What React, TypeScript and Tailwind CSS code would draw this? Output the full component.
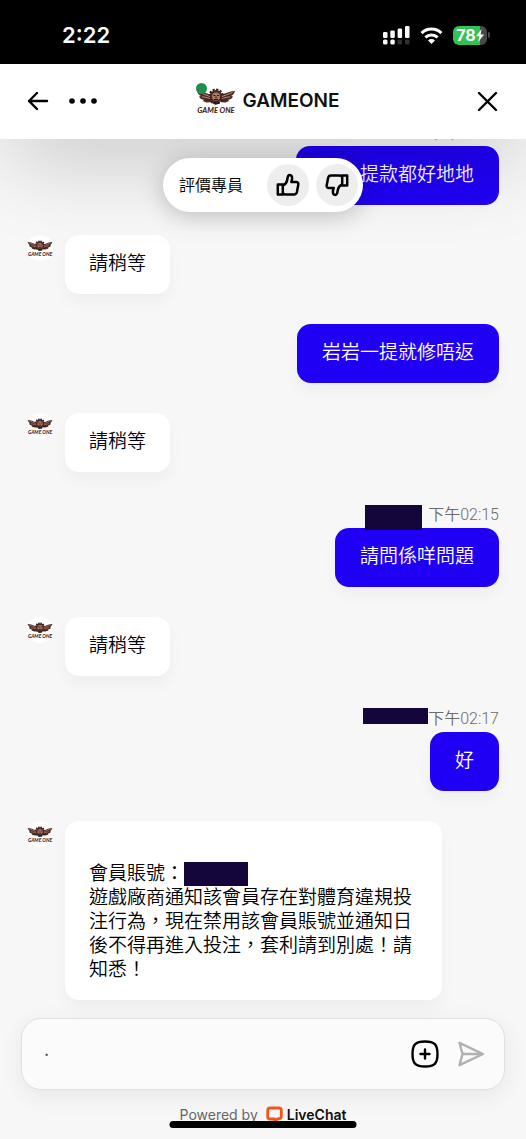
import type {ReactNode} from 'react';

type MessageProps = {
  children: ReactNode;
};

const Wings = ({className}: { className: string }) => (
  <svg viewBox="0 0 40 28" className={className} aria-hidden="true">
    <g fill="#4a2a22">
      <path d="M15 8C10 6 5 4 1 4c1 3 2 4 4 5l-2 .5c1 2.500 3 3 5 3.200l-1 1c2 2 5 2 8 1.300z"/>
      <path d="M25 8c5-2 10-4 14-4-1 3-2 4-4 5l2 .5c-1 2.500-3 3-5 3.200l1 1c-2 2-5 2-8 1.300z"/>
      <circle cx="20" cy="9.500" r="6.500"/>
    </g>
    <circle cx="20" cy="9.500" r="7" fill="none" stroke="#33191a" strokeWidth="2" strokeDasharray="2.200 1.460"/>
    <path
      d="M14 9.500C10 8 6 6.500 3.500 5.500M14 11.500C11 10.500 8 10 6 9.800M26 9.500c4-1.500 8-3 10.500-4M26 11.500c3-1 6-1.500 8-1.700"
      fill="none"
      stroke="#c89a86"
      strokeWidth="0.900"
    />
    <circle cx="20" cy="9.500" r="4" fill="#a87866"/>
    <path d="M17.500 8.500h2M21 8.500h2M20 9.500v2M18 12.500h4M16 15.500l4 1.500 4-1.500" stroke="#33191a" strokeWidth="1.200"/>
    <text
      x="20"
      y="25.500"
      textAnchor="middle"
      fontSize="7.500"
      fontWeight="900"
      fontStyle="italic"
      fill="#4a1f18"
      fontFamily="Lato, sans-serif"
    >
      GAME ONE
    </text>
  </svg>
);

const ThumbIcon = ({className = ''}: { className?: string }) => (
  <svg
    viewBox="0 0 24 24"
    className={`size-6 ${className}`}
    fill="none"
    stroke="currentColor"
    strokeWidth="2.500"
    strokeLinejoin="round"
    aria-hidden="true"
  >
    <path d="M1.800 11.500h5v10h-5z"/>
    <path d="M6.800 12.500c2.800-1.200 4.200-3.300 4.600-6.500.2-2.600.7-4 2.300-4 1.900 0 2.600 1.600 2.400 3.600-.1 1.200-.4 2.200-.8 3.400h4.700c1.800 0 2.600 1.200 2.300 2.800l-1.400 7.200c-.4 1.700-1.300 2.500-2.900 2.500H10c-1.300 0-2.300-.2-3.200-1"/>
  </svg>
);

const StatusBar = () => (
  <div className="flex h-16 items-center justify-between bg-black pl-[62px] pr-9 pt-1.5 text-white">
    <span className="text-[22px] font-semibold leading-7">2:22</span>
    <div className="flex items-center gap-2.5">
      <svg viewBox="0 0 27 19" className="h-[19px] w-[27px]" fill="white" aria-hidden="true">
        <rect x="0" y="6" width="4.500" height="6" rx="1.200"/>
        <rect x="7.300" y="4.500" width="4.500" height="7.500" rx="1.200"/>
        <rect x="14.600" y="2.500" width="4.500" height="9.500" rx="1.200"/>
        <rect x="22" y="0" width="4.500" height="12" rx="1.200"/>
        <rect x="0" y="13.500" width="4.500" height="5" rx="1.500"/>
        <rect x="7.300" y="13.500" width="4.500" height="5" rx="1.500"/>
        <rect x="14.600" y="13.500" width="4.500" height="5" rx="1.500" fill="#333"/>
        <rect x="22" y="13.500" width="4.500" height="5" rx="1.500" fill="#333"/>
      </svg>
      <svg viewBox="0 0 24 18" className="h-[17px] w-[23px]" fill="none" stroke="white" strokeWidth="3.200" aria-hidden="true">
        <path d="M1.500 6.500a15 15 0 0 1 21 0"/>
        <path d="M5.500 11a9.300 9.300 0 0 1 13 0"/>
        <path d="M12 18l-3.700-3.800a5.300 5.300 0 0 1 7.400 0z" fill="white" stroke="none"/>
      </svg>
      <div className="flex items-center gap-px">
        <div
          className="flex h-[19px] w-[34px] items-center justify-center rounded-md bg-linear-to-r from-[#34c759] from-78% to-[#4a4a4a] to-78% text-base font-bold leading-none">
          78
          <svg viewBox="0 0 8 13" className="h-[13px] w-2" fill="white" aria-hidden="true">
            <path d="M5.500 0L0 7.200h3.300L2.300 13 8 5.500H4.700z"/>
          </svg>
        </div>
        <div className="h-1.5 w-0.5 rounded-r-full bg-[#4a4a4a]"/>
      </div>
    </div>
  </div>
);

const Header = () => (
  <header
    className="relative z-10 flex h-[75px] items-center justify-between bg-white px-[27px] pb-0.5 shadow-[0_20px_90px_-10px_rgba(0,0,0,0.28)]">
    <div className="flex w-[72px] items-center gap-5">
      <button type="button" aria-label="Back">
        <svg
          viewBox="0 0 22 20"
          className="h-5 w-[22px]"
          fill="none"
          stroke="black"
          strokeWidth="2.400"
          strokeLinecap="round"
          strokeLinejoin="round"
        >
          <path d="M20 10H2M10 2L2 10l8 8"/>
        </svg>
      </button>
      <button type="button" aria-label="Menu">
        <svg viewBox="0 0 28 6" className="h-1.5 w-7">
          <circle cx="3" cy="3" r="2.800"/>
          <circle cx="14" cy="3" r="2.800"/>
          <circle cx="25" cy="3" r="2.800"/>
        </svg>
      </button>
    </div>
    <div className="flex items-center gap-1.5 pl-2.5">
      <div className="relative">
        <Wings className="h-7 w-10"/>
        <span className="absolute -top-1 left-0 size-[11px] rounded-full bg-[#1f8f4e]"/>
      </div>
      <h1 className="text-[19px] font-semibold leading-6 text-[#111]">GAMEONE</h1>
    </div>
    <div className="flex w-[72px] justify-end">
      <button type="button" aria-label="Close">
        <svg viewBox="0 0 24 24" className="size-6" stroke="black" strokeWidth="2.400" strokeLinecap="round">
          <path d="M4 4l17 17M21 4L4 21"/>
        </svg>
      </button>
    </div>
  </header>
);

const RatingPill = () => (
  <div
    className="absolute left-1/2 top-[19px] z-20 flex h-[54px] w-[200px] -translate-x-1/2 items-center rounded-full bg-white pl-4 pr-[5px] shadow-[0_4px_24px_rgba(0,0,0,0.22)]">
    <span className="flex-1 text-base font-[350] text-black">評價專員</span>
    <div className="flex gap-[7px]">
      <button
        type="button"
        aria-label="Good"
        className="flex size-[42px] items-center justify-center rounded-full bg-[#eeeeee]"
      >
        <ThumbIcon/>
      </button>
      <button
        type="button"
        aria-label="Bad"
        className="flex size-[42px] items-center justify-center rounded-full bg-[#eeeeee]"
      >
        <ThumbIcon className="rotate-180"/>
      </button>
    </div>
  </div>
);

const AgentMessage = ({children}: MessageProps) => (
  <div className="flex items-start gap-3">
    <div className="flex size-[26px] shrink-0 items-center justify-center rounded-full bg-white">
      <Wings className="h-[19px] w-[26px]"/>
    </div>
    <div
      className="max-w-[377px] rounded-[14px] bg-white px-6 pb-[18px] pt-[17px] text-[19px] font-[350] leading-6 text-black shadow-[0_8px_16px_rgba(0,0,0,0.04)]">
      {children}
    </div>
  </div>
);

const UserMessage = ({children}: MessageProps) => (
  <div className="flex justify-end">
    <div
      className="rounded-[14px] bg-[#2000f5] px-[25px] pb-[18px] pt-[17px] text-[19px] font-[350] leading-6 text-white shadow-[0_8px_16px_rgba(0,0,0,0.04)]">
      {children}
    </div>
  </div>
);

const Time = ({children}: MessageProps) => (
  <time className="font-[Roboto,'Noto_Sans_CJK_TC',sans-serif] text-base font-[350] leading-[26px] text-[#6b6b6b]">
    {children}
  </time>
);

const Composer = () => (
  <form
    className="mx-[21px] flex h-[72px] items-center rounded-[20px] border border-[#e0e0e0] bg-[#fbfbfb] pl-[22px] pr-[19px] shadow-[0_6px_24px_rgba(0,0,0,0.07)]">
    <textarea
      aria-label="Message"
      rows={1}
      defaultValue="."
      className="h-8 min-w-0 flex-1 resize-none overflow-hidden bg-transparent text-lg leading-6 text-[#444] outline-none"
    />
    <div className="flex items-center gap-[18px]">
      <button type="button" aria-label="Add">
        <svg
          viewBox="0 0 28 28"
          className="size-7"
          fill="none"
          stroke="black"
          strokeWidth="2.400"
          strokeLinecap="round"
        >
          <path d="M14 1.500c9.500 0 12.500 3 12.500 12.500s-3 12.500-12.500 12.500S1.500 23.500 1.500 14 4.500 1.500 14 1.500z"/>
          <path d="M14 9.500v9M9.500 14h9"/>
        </svg>
      </button>
      <button type="submit" aria-label="Send">
        <svg
          viewBox="0 0 28 28"
          className="size-7"
          fill="none"
          stroke="#b0b0b0"
          strokeWidth="2.400"
          strokeLinejoin="round"
        >
          <path d="M2.500 2.800L26 14 2.500 25.200 5.500 14zM5.500 14H26"/>
        </svg>
      </button>
    </div>
  </form>
);

const Footer = () => (
  <footer className="relative flex h-[49px] items-center justify-center gap-2">
    <span className="text-sm text-[#666]">Powered by</span>
    <a href="#livechat" className="flex items-center gap-1 text-sm font-semibold text-[#111]">
      <svg
        viewBox="0 0 17 17"
        className="size-[17px]"
        fill="none"
        stroke="#f0561d"
        strokeWidth="2.800"
        strokeLinejoin="round"
        aria-hidden="true"
      >
        <path d="M4 2h9q2.300 0 2.300 2.300v6.200q0 2-2 2.200l-2 .3-2.800 2.500v-2.500H4q-2.300 0-2.300-2.300V4.300Q1.700 2 4 2z"/>
      </svg>
      LiveChat
    </a>
    <div className="absolute bottom-[11px] left-1/2 h-[7px] w-[187px] -translate-x-1/2 rounded-full bg-black"/>
  </footer>
);

const App = () => {
  return (
    <div
      lang="zh-Hant"
      className="flex min-h-screen flex-col bg-[#f7f7f7] font-[Inter,'Noto_Sans_CJK_TC',sans-serif]"
    >
      <StatusBar/>
      <Header/>
      <div className="relative flex-1">
        <RatingPill/>
        <main className="flex flex-col gap-[30px] px-[27px] pb-[18px]">
          <div className="-mt-[19px]">
            <div className="flex justify-end">
              <Time>下午02:14</Time>
            </div>
            <div className="flex justify-end">
              <div
                className="w-[203px] rounded-[14px] bg-[#2000f5] px-[25px] pb-[18px] pt-[17px] text-right text-[19px] font-[350] leading-6 text-white">
                提款都好地地
              </div>
            </div>
          </div>
          <AgentMessage>請稍等</AgentMessage>
          <UserMessage>岩岩一提就修唔返</UserMessage>
          <AgentMessage>請稍等</AgentMessage>
          <div>
            <div className="flex items-end justify-end gap-1.5">
              <span className="z-10 -mb-0.5 h-[25px] w-[57px] bg-[#14053b]"/>
              <Time>下午02:15</Time>
            </div>
            <UserMessage>請問係咩問題</UserMessage>
          </div>
          <AgentMessage>請稍等</AgentMessage>
          <div>
            <div className="flex items-start justify-end">
              <span className="mt-0.5 h-4 w-[65px] bg-[#14053b]"/>
              <Time>下午02:17</Time>
            </div>
            <UserMessage>好</UserMessage>
          </div>
          <AgentMessage>
            <br/>
            <p className="flex items-center">
              會員賬號：
              <span className="h-6 w-16 bg-[#14053b]"/>
            </p>
            <p>遊戲廠商通知該會員存在對體育違規投注行為，現在禁用該會員賬號並通知日後不得再進入投注，套利請到別處！請知悉！</p>
          </AgentMessage>
        </main>
      </div>
      <Composer/>
      <Footer/>
    </div>
  );
};

export default App;
